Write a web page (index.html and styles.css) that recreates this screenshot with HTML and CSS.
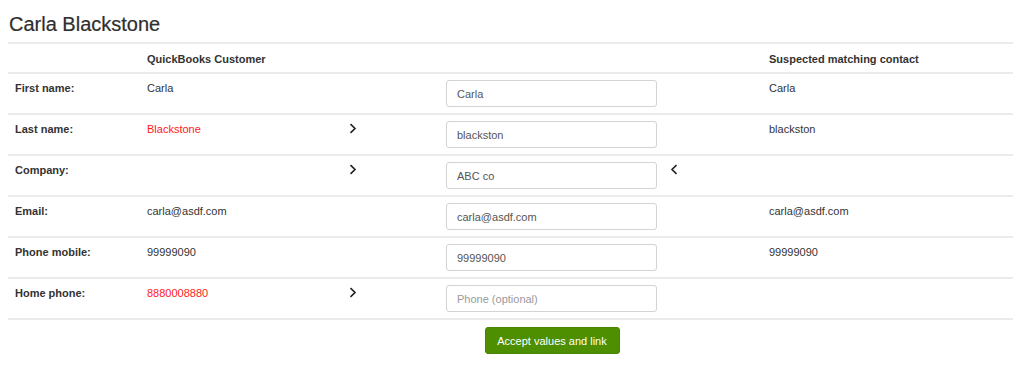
FILE: index.html
```html
<!DOCTYPE html>
<html>
<head>
<meta charset="utf-8">
<link rel="stylesheet" href="styles.css">
</head>
<body>
<h2 class="title">Carla Blackstone</h2>
<table class="merge">
  <colgroup>
    <col class="c-label"><col class="c-qb"><col class="c-arrow"><col class="c-input"><col class="c-back"><col class="c-match">
  </colgroup>
  <thead>
    <tr class="head">
      <th></th><th>QuickBooks Customer</th><th></th><th></th><th></th><th>Suspected matching contact</th>
    </tr>
  </thead>
  <tbody>
    <tr>
      <th>First name:</th><td>Carla</td><td></td>
      <td class="in"><input class="field" type="text" value="Carla"></td><td></td><td>Carla</td>
    </tr>
    <tr>
      <th>Last name:</th><td class="diff">Blackstone</td>
      <td class="chev"><svg width="8" height="11" viewBox="0 0 8 11"><path d="M1.5 1.2 L6 5.5 L1.5 9.8" fill="none" stroke="#222" stroke-width="1.6"/></svg></td>
      <td class="in"><input class="field" type="text" value="blackston"></td><td></td><td>blackston</td>
    </tr>
    <tr>
      <th>Company:</th><td></td>
      <td class="chev"><svg width="8" height="11" viewBox="0 0 8 11"><path d="M1.5 1.2 L6 5.5 L1.5 9.8" fill="none" stroke="#222" stroke-width="1.6"/></svg></td>
      <td class="in"><input class="field" type="text" value="ABC co"></td>
      <td class="chev"><svg width="8" height="11" viewBox="0 0 8 11"><path d="M6.5 1.2 L2 5.5 L6.5 9.8" fill="none" stroke="#222" stroke-width="1.6"/></svg></td>
      <td></td>
    </tr>
    <tr>
      <th>Email:</th><td>carla@asdf.com</td><td></td>
      <td class="in"><input class="field" type="text" value="carla@asdf.com"></td><td></td><td>carla@asdf.com</td>
    </tr>
    <tr>
      <th>Phone mobile:</th><td>99999090</td><td></td>
      <td class="in"><input class="field" type="text" value="99999090"></td><td></td><td>99999090</td>
    </tr>
    <tr class="last">
      <th>Home phone:</th><td class="diff">8880008880</td>
      <td class="chev"><svg width="8" height="11" viewBox="0 0 8 11"><path d="M1.5 1.2 L6 5.5 L1.5 9.8" fill="none" stroke="#222" stroke-width="1.6"/></svg></td>
      <td class="in"><input class="field" type="text" placeholder="Phone (optional)"></td><td></td><td></td>
    </tr>
  </tbody>
  <tfoot>
    <tr>
      <td></td><td></td><td></td>
      <td class="act"><button class="accept" type="button">Accept values and link</button></td>
      <td></td><td></td>
    </tr>
  </tfoot>
</table>
</body>
</html>
```

FILE: styles.css
```css
html, body {
  margin: 0;
  background: #fff;
}
body {
  padding: 8px;
  font-family: "Liberation Sans", Arial, sans-serif;
  color: #333;
  font-size: 11px;
}
.title {
  margin: 5px 0 0 1px;
  font-size: 20px;
  line-height: 22px;
  font-weight: normal;
  color: #2e2e2e;
  height: 29px;
  -webkit-text-stroke: 0.2px #2e2e2e;
}
.merge {
  width: 1005px;
  border-collapse: collapse;
  table-layout: fixed;
}
.c-label { width: 132px; }
.c-qb { width: 202px; }
.c-arrow { width: 97px; }
.c-input { width: 224px; }
.c-back { width: 99px; }
.c-match { width: 251px; }

.merge th, .merge td {
  text-align: left;
  vertical-align: top;
  padding: 7px 7px 0 7px;
  line-height: 14px;
  font-size: 11px;
}
.merge th { font-weight: bold; color: #333; }
.merge td { color: #333; }

.head th {
  border-top: 2px solid #ebebeb;
  height: 30px;
  box-sizing: border-box;
  padding-top: 8px;
}
tbody tr {
  height: 41px;
}
tbody th, tbody td {
  border-top: 2px solid #ebebeb;
}
tbody tr.last th, tbody tr.last td {
  border-bottom: 2px solid #ebebeb;
}
.merge td.in {
  padding-top: 6px;
}
.merge td.chev {
  padding-top: 8px;
}
.merge td.diff {
  color: #ff1a1a;
}
.field {
  display: block;
  box-sizing: border-box;
  width: 211px;
  height: 27px;
  margin: 0;
  padding: 0 10px;
  border: 1px solid #d3d3d3;
  border-radius: 3px;
  font-family: "Liberation Sans", Arial, sans-serif;
  font-size: 11px;
  color: #555;
  background: #fff;
  outline: none;
}
.field::placeholder {
  color: #9a9a9a;
}
tfoot td {
  padding: 7px 0 0 0;
}
.merge td.act {
  padding: 7px 0 0 0;
  text-align: center;
}
.accept {
  display: inline-block;
  width: 135px;
  height: 27px;
  margin-left: 2px;
  padding: 0;
  border: 1px solid #4a8500;
  border-radius: 3px;
  background: #4d8f00;
  color: #fff;
  font-family: "Liberation Sans", Arial, sans-serif;
  font-size: 11px;
  cursor: pointer;
}
```
